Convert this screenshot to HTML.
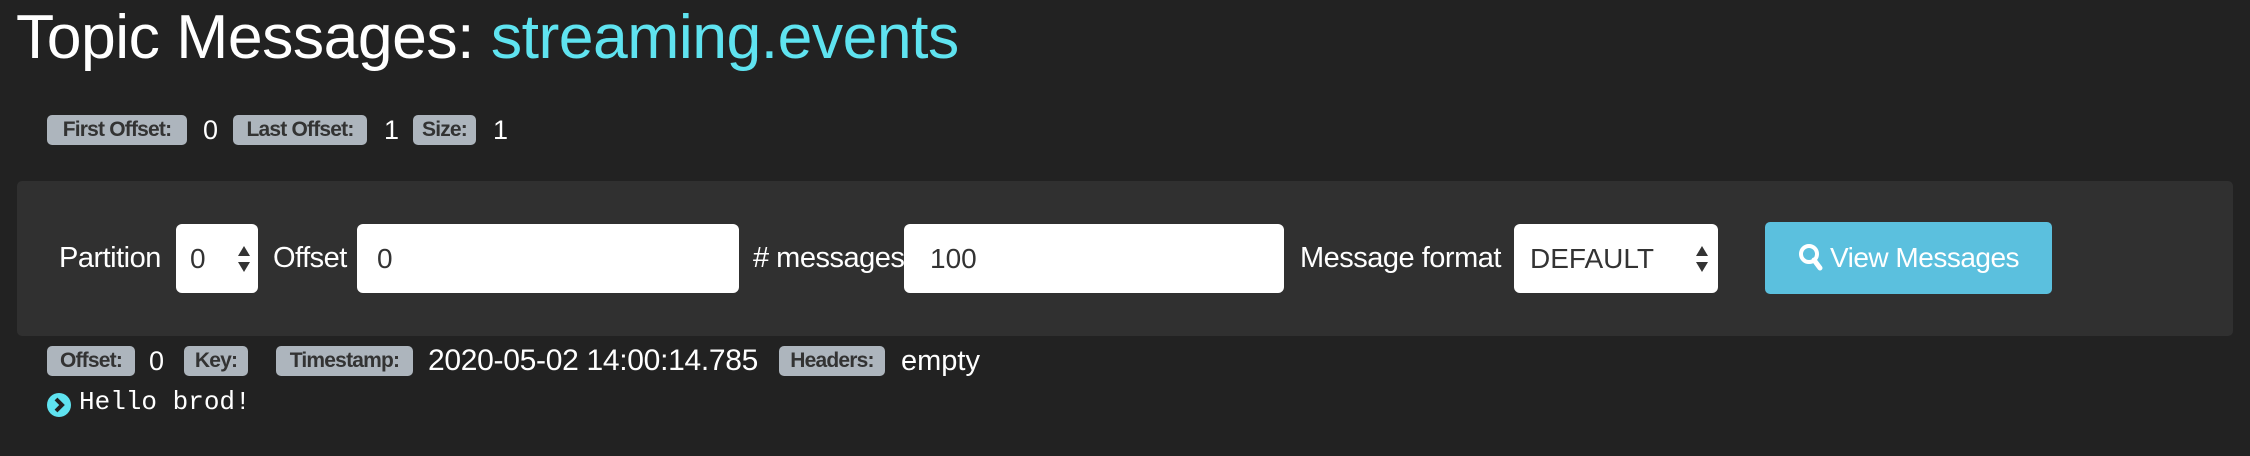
<!DOCTYPE html>
<html><head><meta charset="utf-8"><style>
*{box-sizing:border-box;margin:0;padding:0}
body{width:2250px;height:456px;background:#222;font-family:"Liberation Sans",sans-serif;color:#fff;position:relative;overflow:hidden}
.a{position:absolute;white-space:nowrap}
.title{left:16px;top:2px;font-size:62.5px;line-height:70px;letter-spacing:-0.5px}
.title span{color:#5fe3f0}
.b{position:absolute;background:#adb5bd;color:#333;font-weight:bold;font-size:21px;border-radius:5px;height:30px;line-height:30px;text-align:center;letter-spacing:-0.8px;white-space:nowrap}
.v{position:absolute;font-size:27px;line-height:30px;white-space:nowrap}
.panel{left:17px;top:181px;width:2216px;height:155px;background:#303030;border-radius:5px}
.lbl{position:absolute;font-size:29px;line-height:30px;top:243px;letter-spacing:-0.5px;white-space:nowrap}
.inp{position:absolute;background:#fff;border-radius:6px;top:224px;height:69px;color:#333;font-size:28px;line-height:69px;padding-left:20px}
.arr{position:absolute}
.btn{position:absolute;left:1765px;top:222px;width:287px;height:72px;background:#5bc0de;border-radius:5px;font-size:28px;line-height:72px;text-align:center;letter-spacing:-0.5px;white-space:nowrap}
</style></head><body>
<div class="a title">Topic Messages: <span>streaming.events</span></div>

<div class="b" style="left:47px;top:115px;width:140px">First Offset:</div>
<div class="v" style="left:203px;top:115px">0</div>
<div class="b" style="left:233px;top:115px;width:134px">Last Offset:</div>
<div class="v" style="left:384px;top:115px">1</div>
<div class="b" style="left:413px;top:115px;width:63px">Size:</div>
<div class="v" style="left:493px;top:115px">1</div>

<div class="a panel"></div>
<div class="lbl" style="left:59px">Partition</div>
<div class="inp" style="left:176px;width:82px;padding-left:14px">0
<svg class="arr" style="right:6px;top:20px;width:16px;height:30px" viewBox="0 0 16 30"><path d="M8 2 L14 12 H2Z M8 28 L14 18 H2Z" fill="#333"/></svg></div>
<div class="lbl" style="left:273px">Offset</div>
<div class="inp" style="left:357px;width:382px">0</div>
<div class="lbl" style="left:753px"># messages</div>
<div class="inp" style="left:904px;width:380px;padding-left:26px">100</div>
<div class="lbl" style="left:1300px">Message format</div>
<div class="inp" style="left:1514px;width:204px;padding-left:16px">DEFAULT
<svg class="arr" style="right:8px;top:20px;width:16px;height:30px" viewBox="0 0 16 30"><path d="M8 2 L14 12 H2Z M8 28 L14 18 H2Z" fill="#333"/></svg></div>
<div class="btn"><svg width="26" height="28" viewBox="0 0 26 28" style="vertical-align:-4px;margin-right:6px"><circle cx="11" cy="11" r="8" fill="none" stroke="#fff" stroke-width="4"/><path d="M16 17 L22 25" stroke="#fff" stroke-width="5" stroke-linecap="round"/></svg>View Messages</div>

<div class="b" style="left:47px;top:346px;width:88px">Offset:</div>
<div class="v" style="left:149px;top:346px">0</div>
<div class="b" style="left:184px;top:346px;width:64px">Key:</div>
<div class="b" style="left:276px;top:346px;width:137px">Timestamp:</div>
<div class="v" style="left:428px;top:346px;font-size:30px;letter-spacing:-0.3px">2020-05-02 14:00:14.785</div>
<div class="b" style="left:779px;top:346px;width:106px">Headers:</div>
<div class="v" style="left:901px;top:346px;font-size:29px">empty</div>

<svg class="a" style="left:46px;top:392px" width="26" height="26" viewBox="0 0 26 26"><circle cx="13" cy="13" r="12" fill="#5fe3f0"/><path d="M10 7 L16 13 L10 19" fill="none" stroke="#222" stroke-width="4"/></svg>
<div class="a" style="left:79px;top:387px;font-family:'Liberation Mono',monospace;font-size:26px;line-height:30px">Hello brod!</div>
</body></html>
